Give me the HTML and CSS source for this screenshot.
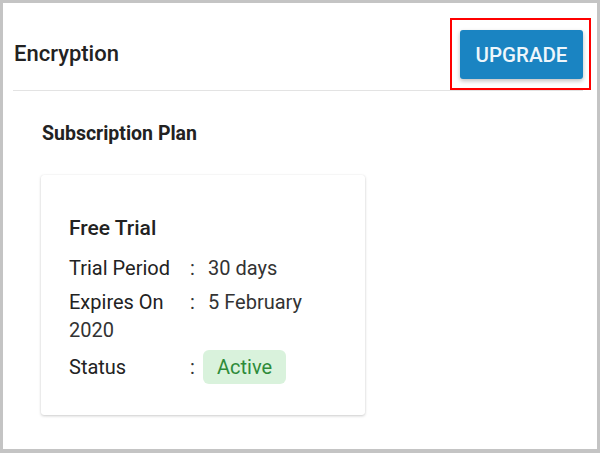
FILE: index.html
```html
<!DOCTYPE html>
<html>
<head>
<meta charset="utf-8">
<link rel="stylesheet" href="styles.css">
</head>
<body>
<div class="frame">
  <div class="header">
    <h1 class="title">Encryption</h1>
    <span class="highlight"><button class="upgrade">UPGRADE</button></span>
  </div>
  <div class="content">
    <h2 class="subtitle">Subscription Plan</h2>
    <div class="card">
      <h3 class="plan">Free Trial</h3>
      <p class="row"><span class="label">Trial Period</span><span class="colon">:</span>30 days</p>
      <p class="row"><span class="label">Expires On</span><span class="colon">:</span>5 February 2020</p>
      <p class="row status"><span class="label">Status</span><span class="colon">:</span><span class="badge">Active</span></p>
    </div>
  </div>
</div>
</body>
</html>
```
FILE: styles.css
```css
* { box-sizing: border-box; }
html, body { margin: 0; padding: 0; }
body {
  width: 600px;
  height: 453px;
  font-family: Roboto, "Liberation Sans", sans-serif;
  color: #212121;
  background: #c4c4c4;
}
.frame {
  width: 600px;
  height: 453px;
  background: #fff;
  border: 3px solid #c4c4c4;
  border-bottom-width: 4px;
}
.header {
  margin: 0 14px 0 10px;
  height: 88px;
  padding-top: 14px;
  display: flex;
  align-items: center;
  justify-content: space-between;
  border-bottom: 1px solid #e3e3e3;
  padding-left: 1px;
}
.title {
  margin: 0;
  font-size: 22px;
  font-weight: 500;
  color: #222;
}
.highlight {
  display: block;
  border: 2px solid #f00;
  padding: 10px 6px 9px 8px;
  margin-right: -8px;
  margin-top: 1px;
}
.upgrade {
  display: block;
  width: 123px;
  height: 49px;
  border: none;
  border-radius: 3px;
  background: #1a84c2;
  color: #eef6fb;
  font-family: Roboto, "Liberation Sans", sans-serif;
  font-size: 20.5px;
  font-weight: 500;
  box-shadow: 0 2px 4px rgba(0,0,0,0.25);
  padding: 0;
}
.content {
  padding: 31px 0 0 39px;
}
.subtitle {
  margin: 0;
  font-size: 19.5px;
  line-height: 24px;
  font-weight: 700;
  color: #222;
}
.card {
  margin-top: 29px;
  margin-left: -1px;
  width: 324px;
  height: 240px;
  background: #fff;
  border-radius: 3px;
  box-shadow: 0 1px 3px rgba(0,0,0,0.2), 0 0 1px rgba(0,0,0,0.08);
  padding: 39px 28px 0 28px;
}
.plan {
  margin: 0 0 12px 0;
  font-size: 21px;
  font-weight: 500;
  color: #222;
  line-height: 28px;
}
.row {
  margin: 0 0 6px 0;
  font-size: 20px;
  line-height: 28px;
  color: #333;
}
.label {
  display: inline-block;
  width: 121px;
  color: #222;
}
.colon {
  display: inline-block;
  width: 18px;
}
.badge {
  display: inline-block;
  background: #d9f2dc;
  color: #2e8b3a;
  font-size: 20px;
  line-height: 24px;
  padding: 5px 14px;
  border-radius: 6px;
  margin-left: -5px;
  vertical-align: baseline;
}
```
